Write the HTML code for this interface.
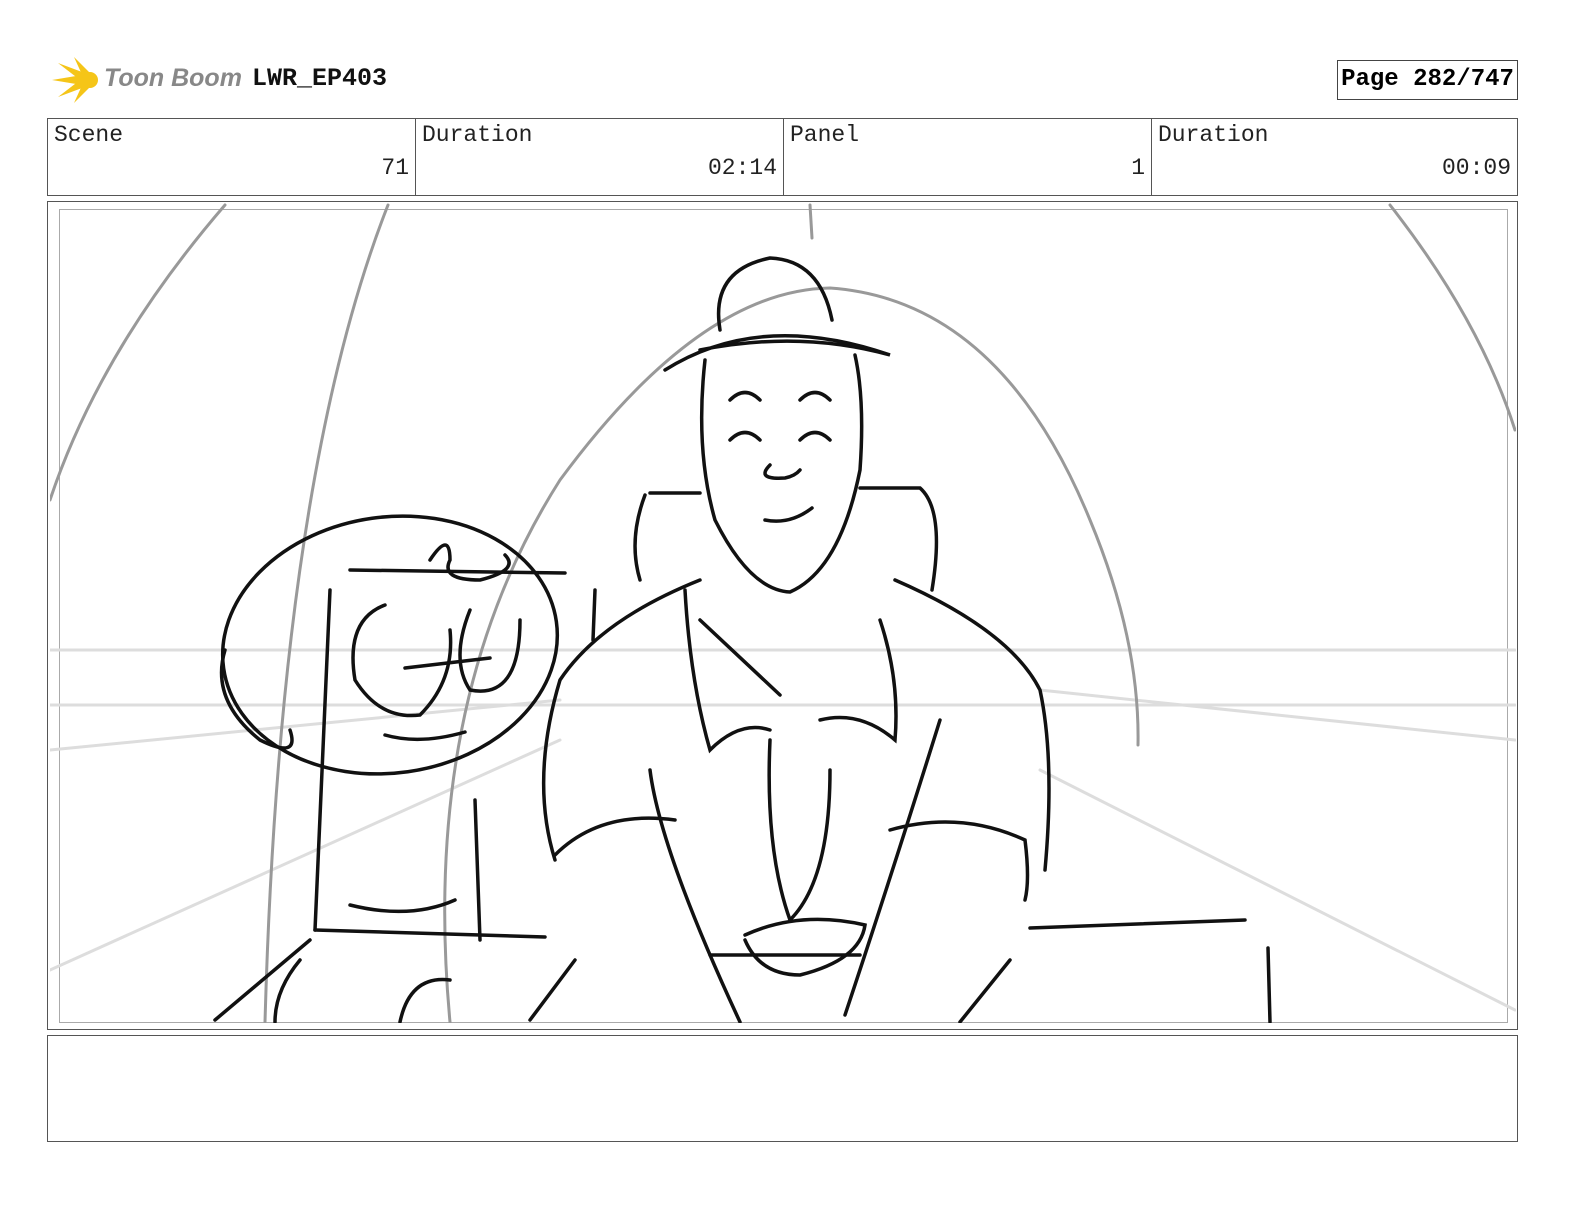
<!DOCTYPE html>
<html style="overflow:hidden"><head><meta charset="utf-8"><style>
html,body{margin:0;padding:0;overflow:hidden}
body{width:1584px;height:1224px;background:#fff;position:relative;font-family:"Liberation Mono",monospace}
.a{position:absolute}
.cell{position:absolute;top:118px;height:78px;border:1px solid #555;box-sizing:border-box;font-size:23px;color:#222}
.cell .l{position:absolute;left:6px;top:3px}
.cell .v{position:absolute;right:6px;top:36px}
</style></head><body>
<svg class="a" style="left:50px;top:55px" width="60" height="50" viewBox="0 0 60 50">
<g fill="#f5c518"><path d="M2 25 L38 19 L38 31Z"/><path d="M8 8 L40 20 L34 28Z"/><path d="M8 42 L40 30 L34 22Z"/><path d="M24 2 L42 20 L34 24Z"/><path d="M24 48 L42 30 L34 26Z"/><circle cx="40" cy="25" r="8"/></g>
</svg>
<div class="a" style="left:104px;top:64px;font-family:'Liberation Sans',sans-serif;font-style:italic;font-weight:bold;font-size:25px;color:#888">Toon Boom</div>
<div class="a" style="left:252px;top:64px;font-weight:bold;font-size:25px;color:#111">LWR_EP403</div>
<div class="a" style="left:1337px;top:60px;width:181px;height:40px;border:1px solid #444;box-sizing:border-box;font-weight:bold;font-size:24px;text-align:center;line-height:38px">Page 282/747</div>
<div class="cell" style="left:47px;width:369px"><span class="l">Scene</span><span class="v">71</span></div>
<div class="cell" style="left:415px;width:369px"><span class="l">Duration</span><span class="v">02:14</span></div>
<div class="cell" style="left:783px;width:369px"><span class="l">Panel</span><span class="v">1</span></div>
<div class="cell" style="left:1151px;width:367px"><span class="l">Duration</span><span class="v">00:09</span></div>
<div class="a" style="left:47px;top:201px;width:1471px;height:829px;border:1px solid #555;box-sizing:border-box"></div>
<div class="a" style="left:59px;top:209px;width:1449px;height:814px;border:1px solid #aaa;box-sizing:border-box"></div>
<div class="a" style="left:47px;top:1035px;width:1471px;height:107px;border:1px solid #555;box-sizing:border-box"></div>
<svg class="a" style="left:0;top:0" width="1584" height="1224" fill="none" stroke-linecap="round">
<defs><clipPath id="c"><rect x="50" y="203" width="1466" height="820"/></clipPath></defs>
<g clip-path="url(#c)">
<g stroke="#ddd" stroke-width="3"><path d="M50 650 H1515"/><path d="M50 705 H1515"/><path d="M50 750 L560 700"/><path d="M1040 690 L1515 740"/><path d="M50 970 L560 740"/><path d="M1040 770 L1515 1010"/></g>
<g stroke="#999" stroke-width="3"><path d="M225 205 Q100 350 50 500"/><path d="M388 205 Q280 480 265 1022"/><path d="M1390 205 Q1480 320 1515 430"/><path d="M450 1022 Q420 700 560 480 Q700 290 830 288 Q1000 300 1090 520 Q1140 640 1138 745"/><path d="M810 205 L812 238"/></g>
<g stroke="#111" stroke-width="3.5">
<path d="M720 330 Q710 270 770 258 Q820 260 832 320"/>
<path d="M665 370 Q760 310 890 355 Q800 330 700 350"/>
<path d="M705 360 Q695 450 715 520 Q750 590 790 592 Q840 570 860 470 Q865 400 855 355"/>
<path d="M730 400 Q745 385 760 400"/><path d="M800 400 Q815 385 830 400"/>
<path d="M730 440 Q745 425 760 440"/><path d="M800 440 Q815 425 830 440"/>
<path d="M770 465 Q755 480 785 478 Q795 476 800 470"/>
<path d="M765 520 Q790 525 812 508"/>
<path d="M650 493 H700"/><path d="M860 488 H920 Q945 510 932 590"/><path d="M645 495 Q628 540 640 580"/>
<path d="M700 580 Q600 620 560 680 Q530 780 555 860"/>
<path d="M555 855 Q600 810 675 820"/>
<path d="M895 580 Q1010 630 1040 690 Q1055 760 1045 870"/>
<path d="M890 830 Q960 810 1025 840 Q1030 880 1025 900"/>
<path d="M650 770 Q660 850 740 1022"/><path d="M940 720 Q890 880 845 1015"/>
<path d="M745 935 Q800 910 865 925 Q860 960 800 975 Q760 975 745 940"/>
<path d="M710 955 H860"/>
<path d="M530 1020 L575 960"/><path d="M960 1022 L1010 960"/>
<path d="M1030 928 L1245 920"/><path d="M1268 948 L1270 1022"/>
<ellipse cx="390" cy="645" rx="168" ry="128" transform="rotate(-8 390 645)"/>
<path d="M350 570 L565 573"/><path d="M430 560 Q450 530 450 560 Q440 580 480 580 Q520 570 505 555"/>
<path d="M385 605 Q345 620 355 680 Q380 720 420 715 Q455 680 450 630"/>
<path d="M470 610 Q450 660 470 690 Q520 700 520 620"/>
<path d="M405 668 L490 658"/>
<path d="M385 735 Q420 745 465 732"/>
<path d="M225 650 Q210 700 260 740 Q300 760 290 730"/>
<path d="M330 590 L315 930"/><path d="M475 800 L480 940"/>
<path d="M315 930 L545 937"/>
<path d="M310 940 L215 1020"/><path d="M300 960 Q275 990 275 1022"/>
<path d="M400 1022 Q410 975 450 980"/>
<path d="M350 905 Q410 920 455 900"/>
<path d="M595 590 L593 640"/>
<path d="M685 590 Q690 680 710 750 Q740 720 770 730"/>
<path d="M880 620 Q900 680 895 740 Q860 710 820 720"/>
<path d="M700 620 L780 695"/><path d="M770 740 Q765 850 790 920 Q830 880 830 770"/>
</g></g></svg>
</body></html>
